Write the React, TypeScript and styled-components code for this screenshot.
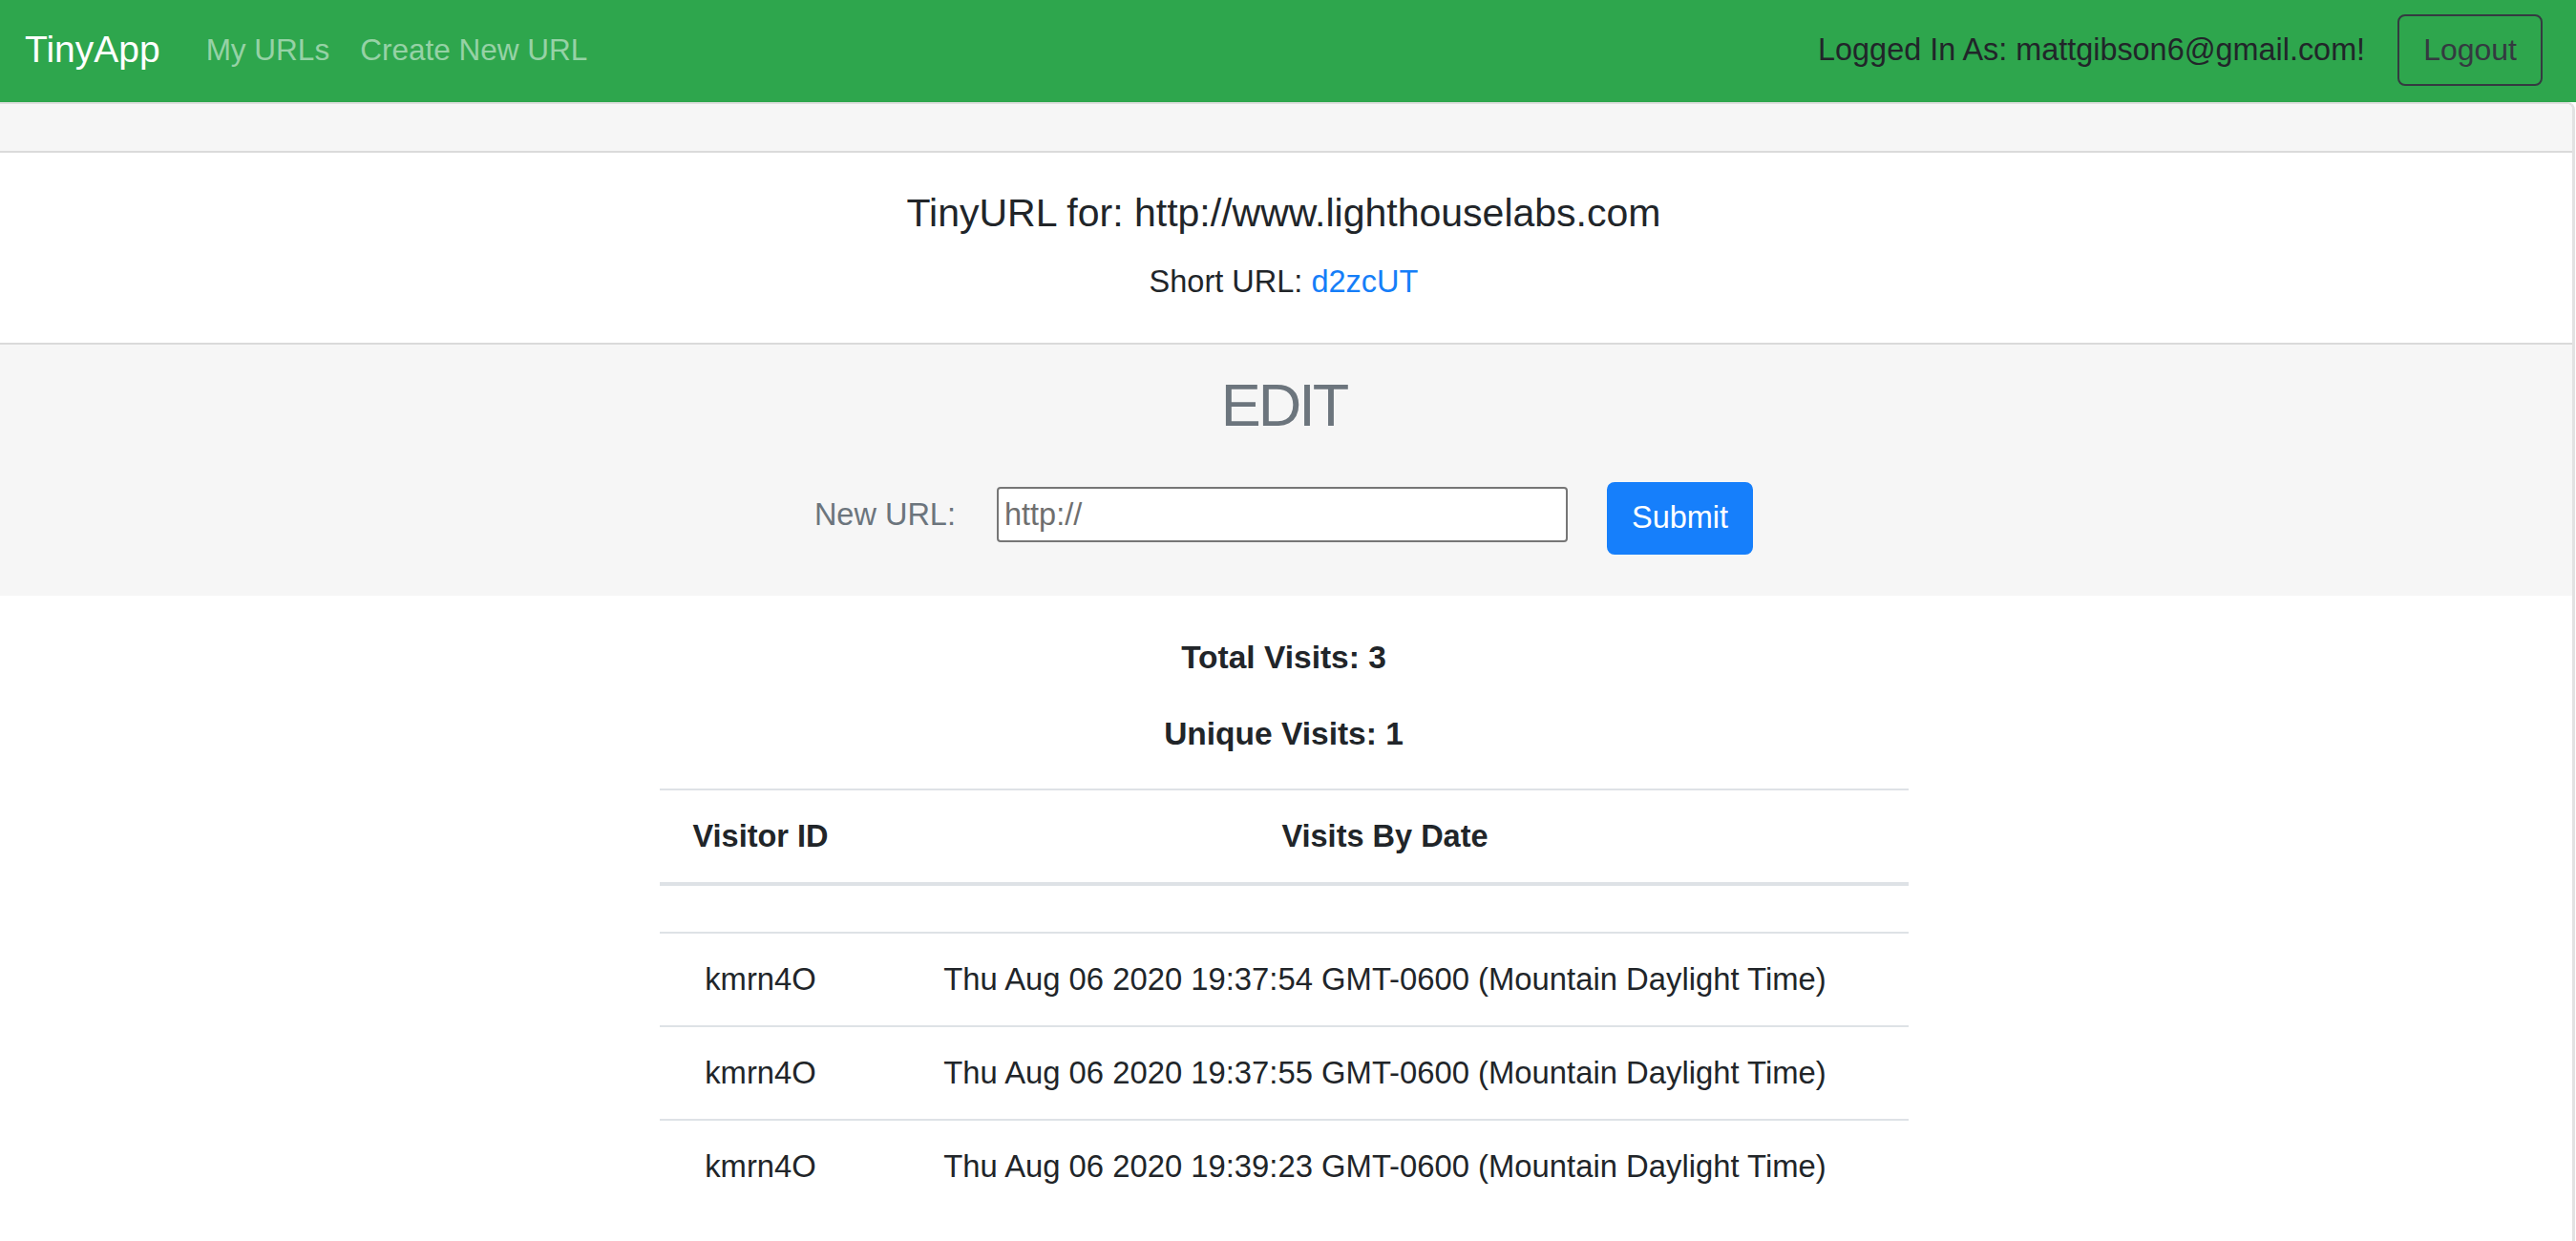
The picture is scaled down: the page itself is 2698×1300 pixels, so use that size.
import React from "react";
import styled, { createGlobalStyle } from "styled-components";

const GlobalStyle = createGlobalStyle`
  html, body {
    margin: 0;
    padding: 0;
    background: #ffffff;
  }
  body {
    font-family: "Liberation Sans", Arial, Helvetica, sans-serif;
    color: #212529;
  }
  *, *::before, *::after {
    box-sizing: border-box;
  }
`;

const Page = styled.div`
  min-height: 100vh;
  display: flex;
  flex-direction: column;
`;

const Navbar = styled.nav`
  height: 107px;
  flex: none;
  background: #2ea64d;
  display: flex;
  align-items: center;
  padding: 0 35px 3px 26px;
`;

const Brand = styled.a`
  font-size: 39px;
  line-height: 1.2;
  color: #ffffff;
  margin-right: 32px;
  text-decoration: none;
`;

const NavLink = styled.a`
  font-size: 31.5px;
  line-height: 48px;
  padding: 0 16px;
  color: rgba(255, 255, 255, 0.5);
  text-decoration: none;
`;

const Spacer = styled.div`
  flex: 1;
`;

const NavText = styled.span`
  font-size: 32.4px;
  line-height: 48px;
  color: #212529;
  margin-right: 34px;
`;

const OutlineButton = styled.button`
  height: 75px;
  padding: 0 25px;
  border: 2px solid #343a40;
  border-radius: 8px;
  background: transparent;
  color: #343a40;
  font-family: inherit;
  font-size: 32px;
  line-height: 1;
  cursor: pointer;
`;

const Card = styled.main`
  flex: 1;
  display: flex;
  flex-direction: column;
  border-top: 2px solid #dfdfdf;
  border-right: 3px solid #e2e2e2;
  border-top-right-radius: 8px;
  margin-right: 1px;
  overflow: hidden;
`;

const CardHeader = styled.div`
  height: 51px;
  background: #f6f6f6;
  border-bottom: 2px solid #dadada;
`;

const CardBody = styled.section`
  padding: 39px 5px 39px 0;
  text-align: center;
  border-bottom: 2px solid #dadada;
`;

const Title = styled.h5`
  margin: 0 0 23px;
  font-size: 41px;
  line-height: 1.2;
  font-weight: 500;
  color: #212529;
`;

const ShortUrl = styled.p`
  margin: 0;
  font-size: 32.5px;
  line-height: 1.5;
`;

const Link = styled.a`
  color: #157ef8;
  text-decoration: none;
`;

const EditSection = styled.section`
  background: #f6f6f6;
  padding: 26px 5px 43px 0;
  text-align: center;
`;

const EditTitle = styled.h1`
  margin: 0 0 35px;
  font-size: 63px;
  line-height: 1.2;
  letter-spacing: -3px;
  font-weight: 400;
  color: #6c757d;
`;

const FormRow = styled.form`
  display: flex;
  justify-content: center;
  align-items: center;
`;

const Label = styled.label`
  font-size: 32.5px;
  line-height: 48px;
  color: #6c757d;
  margin-right: 43px;
`;

const UrlInput = styled.input`
  width: 598px;
  height: 58px;
  margin-right: 41px;
  padding: 0 6px;
  border: 2px solid #767676;
  border-radius: 4px;
  background: #ffffff;
  font-family: inherit;
  font-size: 32.5px;
  color: #212529;
  &::placeholder {
    color: #6f6f6f;
  }
`;

const PrimaryButton = styled.button`
  height: 76px;
  margin-top: 7px;
  padding: 0 24px;
  border: 2px solid #167ffb;
  border-radius: 8px;
  background: #167ffb;
  color: #ffffff;
  font-family: inherit;
  font-size: 32.5px;
  line-height: 1;
  cursor: pointer;
`;

const Content = styled.div`
  padding: 45px 5px 0 0;
  display: flex;
  flex-direction: column;
  align-items: center;
`;

const Stats = styled.div`
  display: flex;
  flex-direction: column;
  align-items: center;
  gap: 40px;
`;

const Stat = styled.h6`
  margin: 0;
  font-size: 33.5px;
  line-height: 40px;
  font-weight: 700;
  color: #212529;
`;

const Table = styled.table`
  width: 1308px;
  margin-top: 37px;
  border-collapse: collapse;
  table-layout: fixed;
  text-align: center;
  font-size: 32.5px;
  color: #212529;
`;

const Th = styled.th<{ $width?: number }>`
  ${(p) => (p.$width ? `width: ${p.$width}px;` : "")}
  padding: 24px 16px;
  line-height: 48px;
  font-weight: 700;
  vertical-align: bottom;
  border-top: 2px solid #dee2e6;
  border-bottom: 4px solid #dee2e6;
`;

const Td = styled.td`
  padding: 24px 16px;
  font-size: 32.8px;
  line-height: 48px;
  border-top: 2px solid #dee2e6;
  white-space: nowrap;
`;

const visits = [
  { id: "kmrn4O", date: "Thu Aug 06 2020 19:37:54 GMT-0600 (Mountain Daylight Time)" },
  { id: "kmrn4O", date: "Thu Aug 06 2020 19:37:55 GMT-0600 (Mountain Daylight Time)" },
  { id: "kmrn4O", date: "Thu Aug 06 2020 19:39:23 GMT-0600 (Mountain Daylight Time)" },
];

export default function App() {
  return (
    <Page>
      <GlobalStyle />
      <Navbar>
        <Brand href="#">TinyApp</Brand>
        <NavLink href="#">My URLs</NavLink>
        <NavLink href="#">Create New URL</NavLink>
        <Spacer />
        <NavText>Logged In As: mattgibson6@gmail.com!</NavText>
        <OutlineButton type="button">Logout</OutlineButton>
      </Navbar>
      <Card>
        <CardHeader />
        <CardBody>
          <Title>TinyURL for: http://www.lighthouselabs.com</Title>
          <ShortUrl>
            Short URL: <Link href="#">d2zcUT</Link>
          </ShortUrl>
        </CardBody>
        <EditSection>
          <EditTitle>EDIT</EditTitle>
          <FormRow onSubmit={(e) => e.preventDefault()}>
            <Label htmlFor="longURL">New URL:</Label>
            <UrlInput id="longURL" type="text" placeholder="http://" />
            <PrimaryButton type="submit">Submit</PrimaryButton>
          </FormRow>
        </EditSection>
        <Content>
          <Stats>
            <Stat>Total Visits: 3</Stat>
            <Stat>Unique Visits: 1</Stat>
          </Stats>
          <Table>
            <thead>
              <tr>
                <Th $width={212}>Visitor ID</Th>
                <Th>Visits By Date</Th>
              </tr>
            </thead>
            <tbody>
              <tr>
                <Td />
                <Td />
              </tr>
              {visits.map((v, i) => (
                <tr key={i}>
                  <Td>{v.id}</Td>
                  <Td>{v.date}</Td>
                </tr>
              ))}
            </tbody>
          </Table>
        </Content>
      </Card>
    </Page>
  );
}
